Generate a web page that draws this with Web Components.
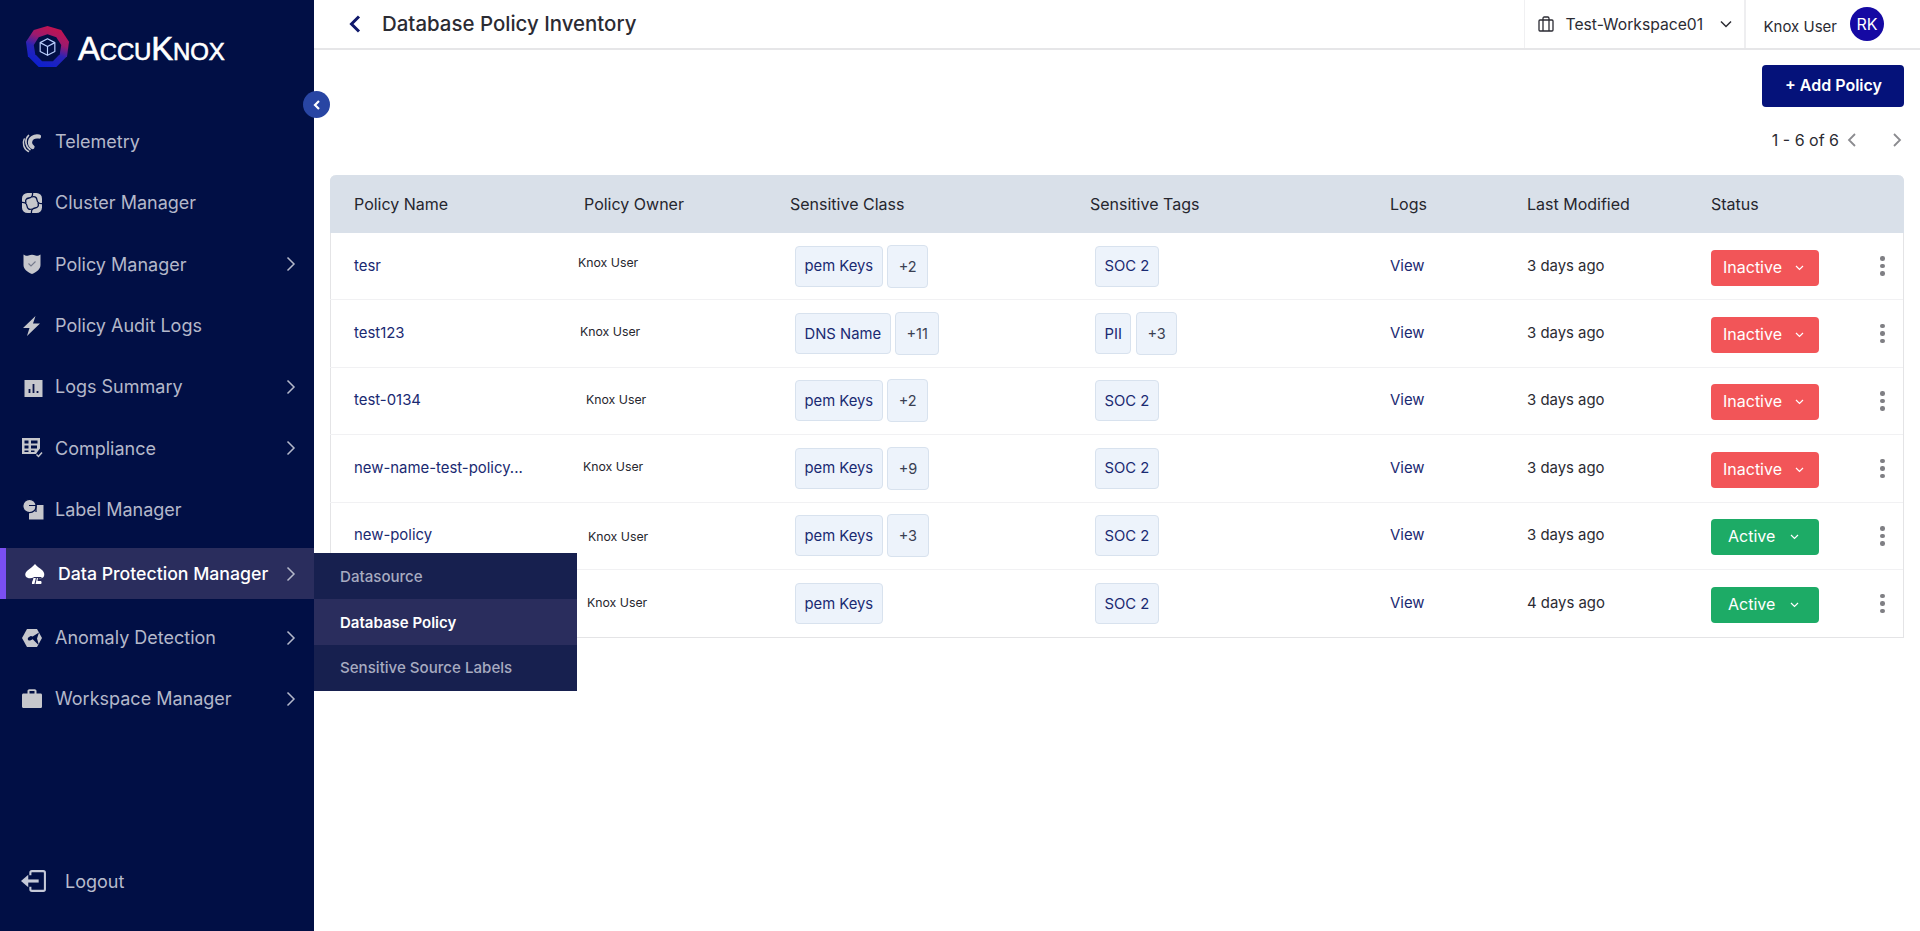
<!DOCTYPE html>
<html lang="en"><head><meta charset="utf-8"><title>Database Policy Inventory</title>
<style>
html,body{margin:0;height:931px;overflow:hidden;background:#fff;font-family:Inter,"Liberation Sans",sans-serif}
app-shell svg{display:block}
</style></head><body>
<app-shell>
  <side-bar slot="side">
    <nav-item label="Telemetry"><svg slot="icon" width="22" height="22" viewBox="0 0 22 22" fill="none" stroke="#c6c7cc" stroke-linecap="round"><path stroke-width="4.200" d="M18 5.500C13 4.500 9 7.500 9 11.500c0 2 1 3.500 2.500 4.500"/><path stroke-width="1.700" d="M7.500 4.500C3.800 8 3.800 14.500 9 18.500"/><path stroke-width="1.500" d="M3.200 8C1.300 12 2.500 18 7.500 20.500"/></svg></nav-item>
    <nav-item label="Cluster Manager"><svg slot="icon" width="22" height="22" viewBox="0 0 22 22"><rect x="1" y="1" width="20" height="20" rx="5.500" fill="#c6c7cc"/><g fill="none" stroke="#010f45" stroke-width="1.300"><path d="M11.500 0c.4 3.500-.6 5.700-3.500 6-2.800.3-4 2-3 5"/><path d="M22 11.500c-3.500.4-5.700-.6-6-3.500-.3-2.800-2-4-5-3"/><path d="M10.500 22c-.4-3.500.6-5.700 3.500-6 2.800-.3 4-2 3-5"/><path d="M0 10.500c3.500-.4 5.700.6 6 3.500.3 2.800 2 4 5 3"/></g></svg></nav-item>
    <nav-item label="Policy Manager" more><svg slot="icon" width="22" height="22" viewBox="0 0 22 22"><path fill="#c6c7cc" d="M2.500 1.500C4.500 3 6 3 7.500 2.500c1.200-.4 2.300-.7 3.500-.7s2.300.3 3.500.7c1.500.5 3 .5 5-1V12c0 4-3.500 7-8.500 9-5-2-8.500-5-8.500-9z"/><path fill="none" stroke="#747a8c" stroke-width="1.100" d="M7.500 10.500l2.500 2.500 4.500-4.500"/></svg></nav-item>
    <nav-item label="Policy Audit Logs"><svg slot="icon" width="22" height="22" viewBox="0 0 22 22" fill="#c6c7cc"><path d="M14.500 1L2 13h6.500L6 21 19 8.500h-7z"/></svg></nav-item>
    <nav-item label="Logs Summary" more><svg slot="icon" width="22" height="22" viewBox="0 0 22 22"><rect x="3.500" y="4" width="18" height="17" fill="#c6c7cc"/><path stroke="#0a1548" stroke-width="1.800" d="M8.500 17v-4M12.500 17V8M16.500 17v-2"/></svg></nav-item>
    <nav-item label="Compliance" more><svg slot="icon" width="24" height="22" viewBox="0 0 24 22"><path fill="#c6c7cc" fill-rule="evenodd" d="M1 1h18v10.500l-2 2.500-2 3H1zM3.500 3.500v3h4v-3zm6.500 0v3h6.500v-3zM3.500 8.500v3h4v-3zm6.500 0v3h6v-3zM3.500 13.500v1.500h4v-1.500zm6.500 0v1.500h3.500v-1.500z"/><path fill="none" stroke="#c6c7cc" stroke-width="1.500" d="M15.500 17.500l2 2 3.500-4"/></svg></nav-item>
    <nav-item label="Label Manager"><svg slot="icon" width="23" height="22" viewBox="0 0 23 22"><path fill="#c6c7cc" d="M8 7h14.500v14.500H8z"/><circle cx="8.500" cy="8" r="6.700" fill="#c6c7cc" stroke="#010f45" stroke-width="1.200"/><path fill="none" stroke="#010f45" stroke-width="1.200" d="M8 7.500h7v6.500"/></svg></nav-item>
    <nav-item label="Data Protection Manager" more active><svg slot="icon" width="22" height="22" viewBox="0 0 22 22"><path fill="#fff" d="M11 1c2 2.500 4.500 4 7 6 3 2.500 3 7 0 8-1.500.5-3 .3-4-.6L13.500 18H17c.8 1 .8 2.500 0 3H8c-.2-1.500.4-3 1-4l.5-2.500c-1.500.8-4 1.200-6 .3C.5 13.500.5 10 3.500 7.500 6 5.500 9 3.500 11 1z"/><path stroke="#2a2d5d" stroke-width="1.100" fill="none" d="M9.500 14.500h8M12.500 14.500l-1.500 6.500"/></svg></nav-item>
    <nav-item label="Anomaly Detection" more><svg slot="icon" width="22" height="22" viewBox="0 0 22 22"><path fill="#c6c7cc" d="M6 2h10l5 9-5 9H6l-5-9z"/><path fill="#010f45" d="M18 5.500l-8 5 7 7 .6-.5-1.600-5.500zM8.500 10a1.800 1.800 0 1 0 .1 0z"/><circle cx="10" cy="11" r="1.900" fill="#010f45"/></svg></nav-item>
    <nav-item label="Workspace Manager" more><svg slot="icon" width="22" height="22" viewBox="0 0 22 22"><path fill="#c6c7cc" d="M2.500 5.500H6.500V3c0-1 .8-1.800 1.800-1.800h5.400c1 0 1.800.8 1.800 1.800v2.500h4c1 0 1.500.7 1.500 1.500v11.500c0 1-.7 1.500-1.500 1.500h-17C1.500 20 1 19.300 1 18.500V7c0-.8.600-1.500 1.500-1.500zM8.500 3v2.500h5V3z"/></svg></nav-item>
  </side-bar>
  <top-bar slot="top"></top-bar>
  <tool-bar slot="main"></tool-bar>
  <policy-table slot="main">
    <policy-row owner-x="-6" owner-y="-4"><a slot="name">tesr</a><tag-pill slot="cls">pem Keys</tag-pill><tag-pill slot="cls" more>+2</tag-pill><tag-pill slot="tags">SOC 2</tag-pill><span slot="mod">3 days ago</span><status-btn slot="status">Inactive</status-btn></policy-row>
    <policy-row owner-x="-4" owner-y="-2"><a slot="name">test123</a><tag-pill slot="cls">DNS Name</tag-pill><tag-pill slot="cls" more>+11</tag-pill><tag-pill slot="tags">PII</tag-pill><tag-pill slot="tags" more>+3</tag-pill><span slot="mod">3 days ago</span><status-btn slot="status">Inactive</status-btn></policy-row>
    <policy-row owner-x="2" owner-y="-1"><a slot="name">test-0134</a><tag-pill slot="cls">pem Keys</tag-pill><tag-pill slot="cls" more>+2</tag-pill><tag-pill slot="tags">SOC 2</tag-pill><span slot="mod">3 days ago</span><status-btn slot="status">Inactive</status-btn></policy-row>
    <policy-row owner-x="-1" owner-y="-2"><a slot="name">new-name-test-policy...</a><tag-pill slot="cls">pem Keys</tag-pill><tag-pill slot="cls" more>+9</tag-pill><tag-pill slot="tags">SOC 2</tag-pill><span slot="mod">3 days ago</span><status-btn slot="status">Inactive</status-btn></policy-row>
    <policy-row owner-x="4" owner-y="1"><a slot="name">new-policy</a><tag-pill slot="cls">pem Keys</tag-pill><tag-pill slot="cls" more>+3</tag-pill><tag-pill slot="tags">SOC 2</tag-pill><span slot="mod">3 days ago</span><status-btn slot="status" active>Active</status-btn></policy-row>
    <policy-row owner-x="3" owner-y="-1"><a slot="name"></a><tag-pill slot="cls">pem Keys</tag-pill><tag-pill slot="tags">SOC 2</tag-pill><span slot="mod">4 days ago</span><status-btn slot="status" active>Active</status-btn></policy-row>
  </policy-table>
</app-shell>
<script>
function def(name, css, html, init){
  customElements.define(name, class extends HTMLElement{
    constructor(){super();this.attachShadow({mode:'open'});this.shadowRoot.innerHTML='<style>'+css+'</style>'+(typeof html==='function'?html(this):html)}
    connectedCallback(){
      if(this._d)return;this._d=1;
      if(typeof html==='function')this.shadowRoot.innerHTML='<style>'+css+'</style>'+html(this);
      if(init)init.call(this);
    }
  });
}
const CHEV='<svg width="10" height="16" viewBox="0 0 10 16" fill="none" stroke="currentColor" stroke-width="1.500" style="display:block"><path d="M1.500 1.500L8 8l-6.500 6.500"/></svg>';
def('app-shell',`:host{display:flex;width:1920px;height:931px;overflow:hidden;position:relative}
 .m{flex:1;min-width:0;display:flex;flex-direction:column}
 .c{flex:1;padding:0 16px 0 16px;display:flex;flex-direction:column}`,
 `<slot name="side"></slot><div class="m"><slot name="top"></slot><div class="c"><slot name="main"></slot></div></div>`);
def('side-bar',`:host{display:flex;flex-direction:column;width:314px;height:931px;background:#010f45;flex:none;position:relative;z-index:2;font-family:Inter,"Liberation Sans",sans-serif}
 .logo{height:111px;flex:none;display:flex;align-items:flex-start;padding:25px 0 0 25px;box-sizing:border-box;gap:8px}
 .word{color:#fff;font:500 33px/44px "Liberation Sans",sans-serif;letter-spacing:-.2px;margin-top:2px;-webkit-text-stroke:.6px #fff}
 .word small{font-size:24px}
 .col{position:absolute;left:303px;top:91px;width:27px;height:27px;border-radius:50%;background:#2845a3;display:flex;align-items:center;justify-content:center}
 .list{display:flex;flex-direction:column}
 .logout{margin-top:auto;height:60px;margin-bottom:20px;display:flex;align-items:center;padding-left:21px;gap:18px;color:#b7bbcc;font-size:18px}
 `,
 `<div class="logo"><svg width="45" height="45" viewBox="0 0 46 46"><defs><linearGradient id="g" x1=".7" y1="0" x2=".3" y2="1"><stop offset="0" stop-color="#c8124a"/><stop offset=".35" stop-color="#9c1a6e"/><stop offset=".6" stop-color="#2a23b5"/><stop offset="1" stop-color="#0a1fd0"/></linearGradient></defs><path fill="url(#g)" d="M23 1l14 4 8 12-2 15-11 11H14L3 32 1 17 9 5z"/><path fill="#010f45" d="M23 9.500l9 3 5 8-1.500 9.500-7 7H17.500l-7-7L9 20.500l5-8z"/><g fill="none" stroke="#bcd0ff" stroke-width="1.200" stroke-linejoin="round"><path d="M23 14l7.500 4v9L23 31l-7.500-4v-9z"/><path d="M15.500 18l7.500 4 7.500-4M23 22v9"/></g></svg><span class="word">A<small>CCU</small>K<small>NOX</small></span></div>
 <div class="col"><svg width="10" height="12" viewBox="0 0 10 12" fill="none" stroke="#fff" stroke-width="2.200" style="display:block"><path d="M7 2L3 6l4 4"/></svg></div>
 <div class="list"><slot></slot></div>
 <div class="logout"><svg width="26" height="22" viewBox="0 0 25 21" fill="none" stroke="#c5c9d8" stroke-width="2" style="display:block"><path d="M9 5V2.500C9 1.700 9.700 1 10.500 1h11c.8 0 1.500.7 1.500 1.500v16c0 .8-.7 1.500-1.500 1.500h-11C9.700 20 9 19.300 9 18.500V16"/><path d="M17 10.500H4" stroke-width="3"/><path fill="#c5c9d8" stroke="none" d="M0 10.500L7 4.500v12z"/></svg><span>Logout</span></div>`);
def('nav-item',`:host{display:flex;align-items:center;height:61.3px;box-sizing:border-box;padding:0 18px 0 21px;color:#b4b8ca;font-size:18px;position:relative}
 :host([active]){height:51px;margin:8.400px 0 7.500px;background:#2a2d5d;color:#fff;font-weight:500;font-size:17.700px;border-left:6px solid #7a4ff0;padding-left:18px}
 .i{width:34px;flex:none;display:flex;align-items:center}
 .t{flex:1;white-space:nowrap}
 .c{color:#b4b8ca;display:flex}`,
 h=>`<span class="i"><slot name="icon"></slot></span><span class="t">${h.getAttribute('label')||''}</span>${h.hasAttribute('more')?`<span class="c">${CHEV}</span>`:''}${h.hasAttribute('active')?'<sub-menu></sub-menu>':''}`);
def('sub-menu',`:host{display:block;position:absolute;left:308px;top:5px;width:263px;background:#17204f;font-size:15.100px;font-weight:500;color:#a7abc0}
 div{height:45.700px;display:flex;align-items:center;padding-left:26px;box-sizing:border-box}
 .a{background:#2a2d5d;color:#fff;font-weight:600;font-size:15px}`,
 `<div>Datasource</div><div class="a">Database Policy</div><div>Sensitive Source Labels</div>`);
def('top-bar',`:host{display:flex;align-items:stretch;height:50px;box-sizing:border-box;border-bottom:2px solid #e6e6e8;flex:none;color:#2b2b33}
 .b{width:25px;margin-left:34px;display:flex;align-items:center;color:#10196b}
 h1{margin:0 0 2px 9px;font-size:20.450px;font-weight:500;line-height:48px;flex:1}
 .ws{width:222px;border-left:1px solid #f0f0f2;border-right:2px solid #eeeef0;display:flex;align-items:center;padding-left:13px;box-sizing:border-box;font-size:15.700px;gap:12px;height:48px}
 .ws span{flex:1;white-space:nowrap}
 .u{display:flex;align-items:center;padding-left:18px;font-size:15px;width:174.500px;box-sizing:border-box;gap:13px;height:48px}
 .u span{margin-top:5px;white-space:nowrap}
 .av{width:34px;height:34px;border-radius:50%;background:#1509a3;color:#fff;font-size:16px;display:flex;align-items:center;justify-content:center}`,
 `<div class="b"><svg width="14" height="20" viewBox="0 0 14 20" fill="none" stroke="currentColor" stroke-width="3" style="display:block"><path d="M11 2.500L3.500 10l7.500 7.500"/></svg></div><h1>Database Policy Inventory</h1>
 <div class="ws"><svg width="16" height="16" viewBox="0 0 16 16" fill="none" stroke="#2b2b33" stroke-width="1.300" style="display:block"><rect x="1" y="4" width="14" height="11" rx="1"/><path d="M5 15V2.500C5 1.700 5.500 1 6.300 1h3.400c.8 0 1.300.7 1.300 1.500V15"/></svg><span>Test-Workspace01</span><svg style="display:block;margin-right:12px" width="12" height="8" viewBox="0 0 12 8" fill="none" stroke="#2b2b33" stroke-width="1.500"><path d="M1 1.500l5 5 5-5"/></svg></div>
 <div class="u"><span>Knox User</span><div class="av">RK</div></div>`);
def('tool-bar',`:host{display:flex;flex-direction:column;align-items:flex-end;flex:none;height:125px;box-sizing:border-box;padding-top:15px;color:#2b2b33}
 button{width:142px;height:42px;background:#05127a;color:#fff;border:0;border-radius:4px;font:600 16px Inter,"Liberation Sans",sans-serif;padding:0 0 3px 1px}
 .p{display:flex;align-items:center;margin-top:20px;font-size:16px;height:26px;line-height:26px}
 .l{margin-left:7px;margin-right:35px}`,
 `<button>+ Add Policy</button><div class="p"><span>1 - 6 of 6</span><svg class="l" width="11" height="16" viewBox="0 0 11 16" fill="none" stroke="#8b8b8f" stroke-width="1.800"><path d="M9 2L3 8l6 6"/></svg><svg style="margin-right:1px" width="11" height="16" viewBox="0 0 11 16" fill="none" stroke="#8b8b8f" stroke-width="1.800"><path d="M2 2l6 6-6 6"/></svg></div>`);
const COLS='grid-template-columns:254px 206px 300px 300px 137px 184px 1fr';
def('policy-table',`:host{display:block;flex:none;width:1574px;box-sizing:border-box;border:1px solid #e4e4e6;border-top:0;border-radius:6px 6px 0 0;font-size:15px;color:#2b2b33}
 .h{display:grid;${COLS};height:58px;align-items:center;background:#d9e0e9;margin:0 -1px;border-radius:6px 6px 0 0;font-size:16px;color:#26262e}
 .h span:first-child{padding-left:24px}`,
 `<div class="h"><span>Policy Name</span><span>Policy Owner</span><span>Sensitive Class</span><span>Sensitive Tags</span><span>Logs</span><span>Last Modified</span><span>Status</span></div><slot></slot>`);
def('policy-row',`:host{display:grid;${COLS};height:67.400px;margin-left:-1px;align-items:center;box-sizing:border-box;border-bottom:1px solid #f1f1f3;font-size:14.900px;color:#2b2b33}
 :host(:last-child){border-bottom:0}
 .n{padding-left:24px;margin-bottom:1px;min-height:18px}
 ::slotted(a){color:#1a2a72}
 .o{font-size:12.300px;color:#26262e;display:block}
 .g{display:flex;gap:4.500px;align-items:center;padding-left:5px}
 .v{color:#1a2a72;margin-bottom:1px}
 .mm{margin-bottom:1px}
 .s{display:flex;align-items:center;justify-content:space-between;padding-right:18px}
 .s ::slotted(status-btn){margin-top:3px}
 .d{width:5px;display:flex;flex-direction:column;gap:3px}
 .d i{width:4.500px;height:4.500px;border-radius:50%;background:#7f7f84}`,
 h=>`<div class="n"><slot name="name"></slot></div>
 <div class="o" style="margin-left:${h.getAttribute('owner-x')||0}px;margin-top:${2*(h.getAttribute('owner-y')||0)}px">Knox User</div>
 <div class="g"><slot name="cls"></slot></div><div class="g"><slot name="tags"></slot></div>
 <div class="v">View</div><div class="mm"><slot name="mod"></slot></div>
 <div class="s"><slot name="status"></slot><div class="d"><i></i><i></i><i></i></div></div>`);
def('tag-pill',`:host{display:inline-flex;align-items:center;justify-content:center;height:41px;padding:0 8.500px;box-sizing:border-box;background:#edf3fb;border:1px solid #d8e2ee;border-radius:4px;font-size:14.800px;color:#1a2a72;white-space:nowrap}
 :host([more]){height:43px;padding:0 10.500px;color:#3a3f52;font-size:14.500px}`,`<slot></slot>`);
def('status-btn',`:host{display:inline-flex;align-items:center;width:108px;height:36px;box-sizing:border-box;padding-left:12px;gap:13px;border-radius:4px;background:#f25558;color:#fff;font-size:16px}
 :host([active]){background:#1dab66;padding-left:17px;gap:15px}
 span{margin-bottom:2px}`,
 `<span><slot></slot></span><svg width="9" height="6" viewBox="0 0 9 6" fill="none" stroke="#fff" stroke-width="1.200" style="display:block"><path d="M1 1l3.500 3.500L8 1"/></svg>`);
</script>
</body></html>
